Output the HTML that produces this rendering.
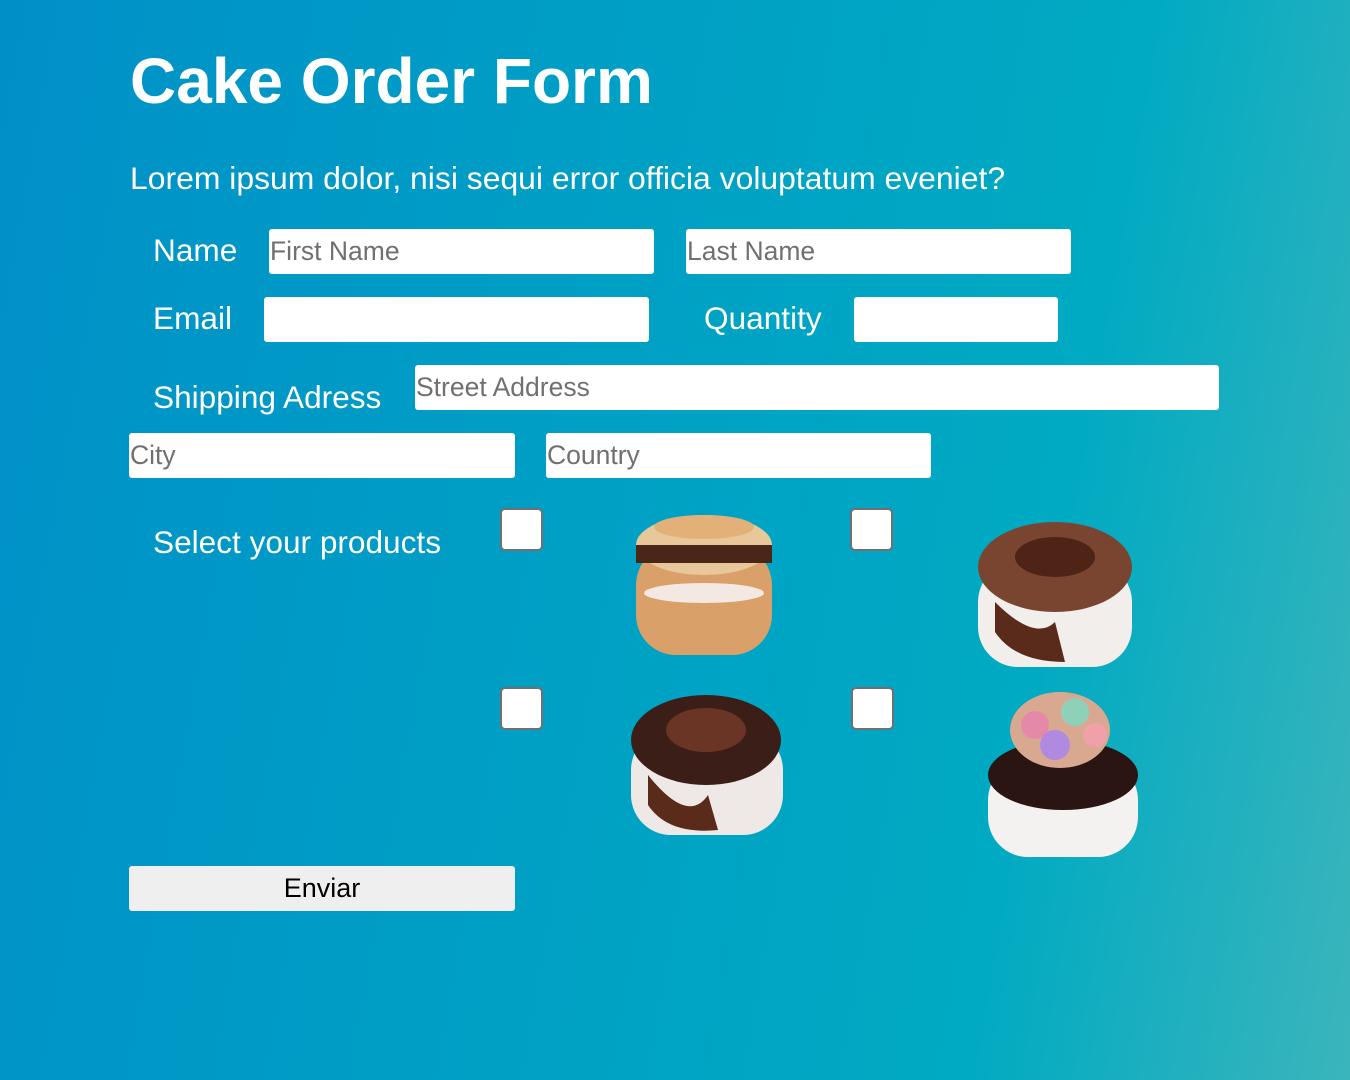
<!DOCTYPE html>
<html><head><style>
*{margin:0;padding:0;box-sizing:border-box}
body{width:1350px;height:1080px;overflow:hidden;background:linear-gradient(100deg,#0090c8 0%,#00a2c4 50%,#00aac2 75%,#3bb5bc 100%);font-family:"Liberation Sans",sans-serif;color:#fff;position:relative}
.a{position:absolute}
h1{position:absolute;left:130px;top:44px;font-size:64px;font-weight:bold;line-height:74px}
.l{position:absolute;font-size:31.6px;line-height:36px}
.in{position:absolute;background:#fff;border-radius:3px;height:45px;color:#707070;font-size:26.5px;line-height:45px;padding-left:1px}
.cb{position:absolute;width:43px;height:43px;background:#fff;border:2px solid #707070;border-radius:5px}
.btn{position:absolute;left:129px;top:866px;width:386px;height:45px;background:#efefef;border-radius:3px;color:#000;font-size:27px;text-align:center;line-height:45px}
</style></head><body>
<h1>Cake Order Form</h1>
<div class="l" style="left:130px;top:160px;font-size:31.9px">Lorem ipsum dolor, nisi sequi error officia voluptatum eveniet?</div>
<div class="l" style="left:153px;top:232px">Name</div>
<div class="in" style="left:269px;top:229px;width:385px">First Name</div>
<div class="in" style="left:686px;top:229px;width:385px">Last Name</div>
<div class="l" style="left:153px;top:300px">Email</div>
<div class="in" style="left:264px;top:297px;width:385px"></div>
<div class="l" style="left:704px;top:300px">Quantity</div>
<div class="in" style="left:854px;top:297px;width:204px"></div>
<div class="l" style="left:153px;top:379px">Shipping Adress</div>
<div class="in" style="left:415px;top:365px;width:804px">Street Address</div>
<div class="in" style="left:129px;top:433px;width:386px">City</div>
<div class="in" style="left:546px;top:433px;width:385px">Country</div>
<div class="l" style="left:153px;top:524px">Select your products</div>
<div class="cb" style="left:500px;top:508px"></div>
<div class="cb" style="left:850px;top:508px"></div>
<div class="cb" style="left:500px;top:687px"></div>
<div class="cb" style="left:851px;top:687px"></div>
<svg class="a" style="left:630px;top:505px" width="150" height="160">
<rect x="6" y="40" width="136" height="110" rx="40" fill="#d9a06a"/>
<ellipse cx="74" cy="40" rx="68" ry="30" fill="#e8c89a"/>
<rect x="6" y="40" width="136" height="18" fill="#4a2618"/>
<ellipse cx="74" cy="88" rx="60" ry="10" fill="#f3e9e2"/>
<ellipse cx="74" cy="22" rx="50" ry="12" fill="#e2b078"/>
</svg>
<svg class="a" style="left:975px;top:512px" width="160" height="160">
<rect x="3" y="50" width="154" height="105" rx="40" fill="#f1eeec"/>
<ellipse cx="80" cy="55" rx="77" ry="45" fill="#7a4530"/>
<path d="M20 90 Q60 130 80 110 L90 150 Q40 150 20 120Z" fill="#5a2a1a"/>
<ellipse cx="80" cy="45" rx="40" ry="20" fill="#4d2416"/>
</svg>
<svg class="a" style="left:628px;top:685px" width="160" height="155">
<rect x="3" y="45" width="152" height="105" rx="40" fill="#eee9e6"/>
<ellipse cx="78" cy="55" rx="75" ry="45" fill="#3a1e17"/>
<path d="M20 90 Q60 140 80 110 L90 145 Q40 150 20 120Z" fill="#5a2a1a"/>
<ellipse cx="78" cy="45" rx="40" ry="22" fill="#6b3526"/>
</svg>
<svg class="a" style="left:985px;top:690px" width="160" height="170">
<rect x="3" y="70" width="150" height="97" rx="40" fill="#f4f2f0"/>
<ellipse cx="78" cy="85" rx="75" ry="35" fill="#2a1512"/>
<ellipse cx="75" cy="40" rx="50" ry="38" fill="#d9a890"/>
<circle cx="50" cy="35" r="14" fill="#e48aa8"/><circle cx="90" cy="22" r="14" fill="#8fd0b8"/><circle cx="70" cy="55" r="15" fill="#b08ae0"/><circle cx="110" cy="45" r="12" fill="#f0a0a8"/>
</svg>
<div class="btn">Enviar</div>
</body></html>
